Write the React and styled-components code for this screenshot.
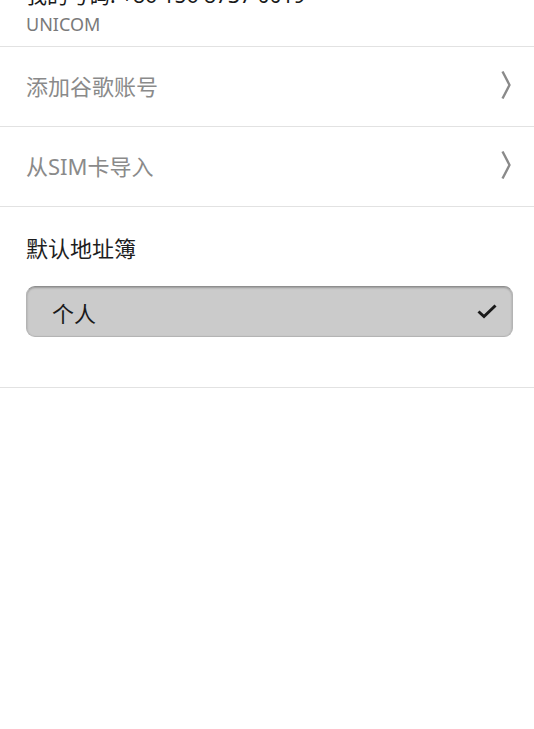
import styled, { createGlobalStyle } from "styled-components";

const GlobalStyle = createGlobalStyle`
    html, body {
        margin: 0;
        padding: 0;
        background: #ffffff;
        overflow: hidden;
    }
    body {
        font-family: "Noto Sans", "Noto Sans CJK SC", sans-serif;
    }
`

const Page = styled.div`
    width: 534px;
    display: flex;
    flex-direction: column;
`

// the list is scrolled, so the first line is partly above the top edge
const Header = styled.div`
    margin-top: -18px;
    padding: 0 26px 8px;
    border-bottom: 1px solid #e2e2e2;
    display: flex;
    flex-direction: column;
    gap: 2px;
`

const Line = styled.div`
    font-size: ${(p) => p.size || 21}px;
    line-height: 27px;
    color: ${(p) => p.color || "#1a1a1a"};
    white-space: nowrap;
`

const Row = styled.div`
    height: 80px;
    box-sizing: border-box;
    padding: 0 22px 3px 26px;
    border-bottom: 1px solid #e2e2e2;
    display: flex;
    align-items: center;
    justify-content: space-between;
`

const RowText = styled.span`
    font-size: 22px;
    color: #8a8a8a;
`

const Section = styled.div`
    padding: 26px 21px 50px 26px;
    border-bottom: 1px solid #e2e2e2;
    display: flex;
    flex-direction: column;
    gap: 23px;
`

const Label = styled.div`
    font-size: 22px;
    line-height: 30px;
    color: #1e1e1e;
`

const Select = styled.div`
    height: 49px;
    box-sizing: content-box;
    border: 1px solid #b4b4b4;
    border-top-color: #8e8e8e;
    border-radius: 9px;
    background: #cbcbcb;
    box-shadow: inset 0 1px 2px rgba(0, 0, 0, 0.25);
    padding: 0 15px 0 25px;
    display: flex;
    align-items: center;
    justify-content: space-between;
`

const SelectText = styled.span`
    font-size: 22px;
    color: #1a1a1a;
`

function Chevron() {
    return (
        <svg width="12" height="30" viewBox="0 0 12 30">
            <path d="M2.5 1.5 L9.5 15 L2.5 28.5" fill="none" stroke="#8a8a8a" strokeWidth="2.4" strokeLinejoin="round" />
        </svg>
    );
}

function Check() {
    return (
        <svg width="20" height="15" viewBox="0 0 20 15">
            <path d="M1.5 7.5 L7 12.5 L18.5 1.5" fill="none" stroke="#1a1a1a" strokeWidth="3" />
        </svg>
    );
}

export default function App() {
    return (
        <>
            <GlobalStyle />
            <Page>
                <Header>
                    <Line>我的号码: +86 156 8737 0019</Line>
                    <Line size={18} color="#7a7a7a">UNICOM</Line>
                </Header>
                <Row>
                    <RowText>添加谷歌账号</RowText>
                    <Chevron />
                </Row>
                <Row>
                    <RowText>从SIM卡导入</RowText>
                    <Chevron />
                </Row>
                <Section>
                    <Label>默认地址簿</Label>
                    <Select>
                        <SelectText>个人</SelectText>
                        <Check />
                    </Select>
                </Section>
            </Page>
        </>
    );
}
